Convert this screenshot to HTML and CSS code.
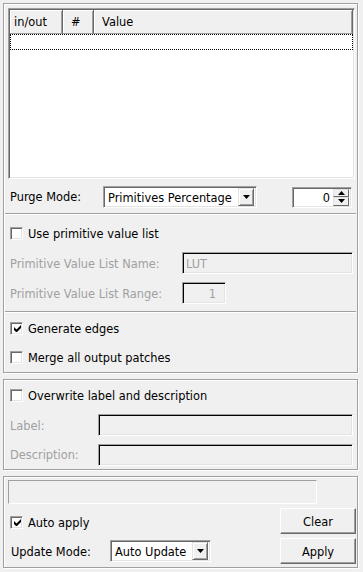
FILE: index.html
```html
<!DOCTYPE html>
<html>
<head>
<meta charset="utf-8">
<link rel="stylesheet" href="styles.css">
</head>
<body>
<div class="group g1">
  <div class="table">
    <div class="thead">
      <div class="th c1">in/out</div>
      <div class="th c2">#</div>
      <div class="th c3">Value</div>
    </div>
    <div class="trow"></div>
  </div>
  <div class="row purge">
    <span class="lbl">Purge Mode:</span>
    <div class="combo combo-purge">
      <span class="ctext">Primitives Percentage</span>
      <span class="cbtn"><svg width="7" height="4" viewBox="0 0 7 4"><path d="M0 0h7L3.5 4z" fill="#000"/></svg></span>
    </div>
    <div class="spin">
      <span class="stext">0</span>
      <span class="sbtns">
        <span class="sb"><svg width="7" height="4" viewBox="0 0 7 4"><path d="M0 4h7L3.5 0z" fill="#000"/></svg></span>
        <span class="sb"><svg width="7" height="4" viewBox="0 0 7 4"><path d="M0 0h7L3.5 4z" fill="#000"/></svg></span>
      </span>
    </div>
  </div>
  <div class="sep"></div>
  <div class="crow first"><span class="cb"></span><span>Use primitive value list</span></div>
  <div class="frow"><span class="dis lbl">Primitive Value List Name:</span><div class="field dfield fname">LUT</div></div>
  <div class="frow"><span class="dis lbl">Primitive Value List Range:</span><div class="field dfield frange">1</div></div>
  <div class="sep sep2"></div>
  <div class="crow"><span class="cb"><svg width="7" height="7" viewBox="0 0 7 7"><path d="M0 2v3l2 2h1l4-4V0L2.5 4.5z" fill="#000"/></svg></span><span>Generate edges</span></div>
  <div class="crow last"><span class="cb"></span><span>Merge all output patches</span></div>
</div>
<div class="group g2">
  <div class="crow"><span class="cb"></span><span>Overwrite label and description</span></div>
  <div class="frow"><span class="dis lbl2">Label:</span><div class="field dfield fwide"></div></div>
  <div class="frow last"><span class="dis lbl2">Description:</span><div class="field dfield fwide"></div></div>
</div>
<div class="group g3">
  <div class="status"></div>
  <div class="brow">
    <div class="crow inl"><span class="cb"><svg width="7" height="7" viewBox="0 0 7 7"><path d="M0 2v3l2 2h1l4-4V0L2.5 4.5z" fill="#000"/></svg></span><span>Auto apply</span></div>
    <div class="btn">Clear</div>
  </div>
  <div class="brow">
    <div class="umode">
      <span class="lbl3">Update Mode:</span>
      <div class="combo combo-upd">
        <span class="ctext">Auto Update</span>
        <span class="cbtn"><svg width="7" height="4" viewBox="0 0 7 4"><path d="M0 0h7L3.5 4z" fill="#000"/></svg></span>
      </div>
    </div>
    <div class="btn">Apply</div>
  </div>
</div>
</body>
</html>
```
FILE: styles.css
```css
* { box-sizing: border-box; }
html, body { margin: 0; padding: 0; }
body {
  width: 363px;
  height: 572px;
  background: #f0f0f0;
  font-family: "DejaVu Sans", sans-serif;
  font-size: 11.4px;
  color: #000;
  padding-top: 3px;
  overflow: hidden;
}
.group {
  margin-left: 3px;
  width: 355px;
  border: 1px solid #a0a0a0;
  box-shadow: inset 1px 1px 0 #fff, 1px 1px 0 #fff;
  display: flex;
  flex-direction: column;
}
.g1 { height: 370px; padding-top: 4px; }
.g2 { height: 91px; margin-top: 6px; }
.g3 { height: 92px; margin-top: 6px; padding-top: 3px; }

.table {
  margin: 0 2px 0 4px;
  height: 171px;
  background: #fff;
  border: 1px solid;
  border-color: #a0a0a0 #fff #fff #a0a0a0;
  box-shadow: inset 1px 1px 0 #696969, inset -1px -1px 0 #e3e3e3;
  padding: 1px;
}
.thead { display: flex; height: 24px; }
.th {
  background: #f0f0f0;
  height: 24px;
  border-right: 1px solid #696969;
  border-bottom: 1px solid #a0a0a0;
  box-shadow: inset 1px 1px 0 #fff, inset -1px 0 0 #a0a0a0;
  display: flex;
  align-items: center;
  padding-left: 4px;
  padding-top: 1px;
}
.c1 { width: 53px; }
.c2 { width: 31px; padding-left: 8px; }
.c3 { flex: 1; padding-left: 8px; }
.trow { height: 16px; border: 1px dotted #000; }

.row { display: flex; align-items: center; }
.purge { margin-top: 7px; height: 22px; padding-left: 6px; }
.purge .lbl { width: 93px; }
.combo {
  height: 22px;
  background: #fff;
  border: 1px solid;
  border-color: #a0a0a0 #fff #fff #a0a0a0;
  box-shadow: inset 1px 1px 0 #696969, inset -1px -1px 0 #e3e3e3;
  display: flex;
  align-items: center;
  padding: 2px;
}
.combo-purge { width: 154px; }
.ctext { flex: 1; padding-left: 2px; padding-top: 1px; white-space: nowrap; overflow: hidden; }
.cbtn {
  flex: none;
  width: 16px;
  height: 18px;
  background: #f0f0f0;
  border: 1px solid;
  border-color: #e3e3e3 #696969 #696969 #e3e3e3;
  box-shadow: inset 1px 1px 0 #fff, inset -1px -1px 0 #a0a0a0;
  display: flex;
  align-items: center;
  justify-content: center;
}
.spin {
  margin-left: 35px;
  width: 60px;
  height: 21px;
  background: #fff;
  border: 1px solid;
  border-color: #a0a0a0 #fff #fff #a0a0a0;
  box-shadow: inset 1px 1px 0 #696969, inset -1px -1px 0 #e3e3e3;
  display: flex;
  align-items: center;
  padding: 2px;
}
.stext { flex: 1; text-align: right; padding-right: 3px; padding-top: 1px; }
.sbtns { display: flex; flex-direction: column; width: 16px; height: 17px; }
.sb {
  flex: 1;
  background: #f0f0f0;
  border: 1px solid;
  border-color: #e3e3e3 #696969 #696969 #e3e3e3;
  display: flex;
  align-items: center;
  justify-content: center;
}
.sb svg { width: 7px; height: 4px; }

.sep {
  margin: 5px 1px 0 1px;
  height: 2px;
  border-top: 1px solid #a0a0a0;
  border-bottom: 1px solid #fff;
}
.sep2 { margin-top: 3px; }

.crow { display: flex; align-items: center; height: 30px; padding-left: 6px; }
.crow.first { margin-top: 3px; }
.crow.last { height: 29px; }
.crow span:last-child { padding-top: 1px; }
.cb {
  flex: none;
  width: 13px;
  height: 13px;
  margin-right: 5px;
  background: #fff;
  border: 1px solid;
  border-color: #a0a0a0 #fff #fff #a0a0a0;
  box-shadow: inset 1px 1px 0 #696969, inset -1px -1px 0 #e3e3e3;
  display: flex;
  align-items: center;
  justify-content: center;
}
.crow .cb { padding: 0; }
.cb svg { margin: 1px 0 0 1px; }

.frow { display: flex; align-items: center; height: 30px; padding-left: 6px; }
.frow.last { height: 29px; }
.dis { color: #a0a0a0; padding-top: 1px; white-space: nowrap; }
.lbl { width: 172px; flex: none; }
.lbl2 { width: 88px; flex: none; }
.field {
  height: 22px;
  border: 1px solid;
  border-color: #a0a0a0 #fff #fff #a0a0a0;
  box-shadow: inset 1px 1px 0 #000, inset -1px -1px 0 #e3e3e3;
  display: flex;
  align-items: center;
  color: #a0a0a0;
  padding: 1px 4px 0 3px;
}
.fname { width: 171px; }
.frange { width: 44px; justify-content: flex-end; padding-right: 9px; }
.fwide { width: 255px; }

.status {
  margin-left: 4px;
  width: 309px;
  height: 24px;
  border: 1px solid;
  border-color: #a0a0a0 #fff #fff #a0a0a0;
}
.brow {
  display: flex;
  align-items: center;
  justify-content: space-between;
  height: 26px;
  margin-top: 4px;
  padding-right: 1px;
}
.crow.inl { height: 26px; padding-top: 2px; }
.umode { display: flex; align-items: center; padding-left: 7px; }
.lbl3 { width: 99px; padding-top: 1px; }
.combo-upd { width: 101px; }
.btn {
  width: 76px;
  height: 26px;
  background: #f0f0f0;
  border: 1px solid;
  border-color: #fff #696969 #696969 #fff;
  box-shadow: inset -1px -1px 0 #a0a0a0;
  display: flex;
  align-items: center;
  justify-content: center;
  padding-top: 1px;
}
```
